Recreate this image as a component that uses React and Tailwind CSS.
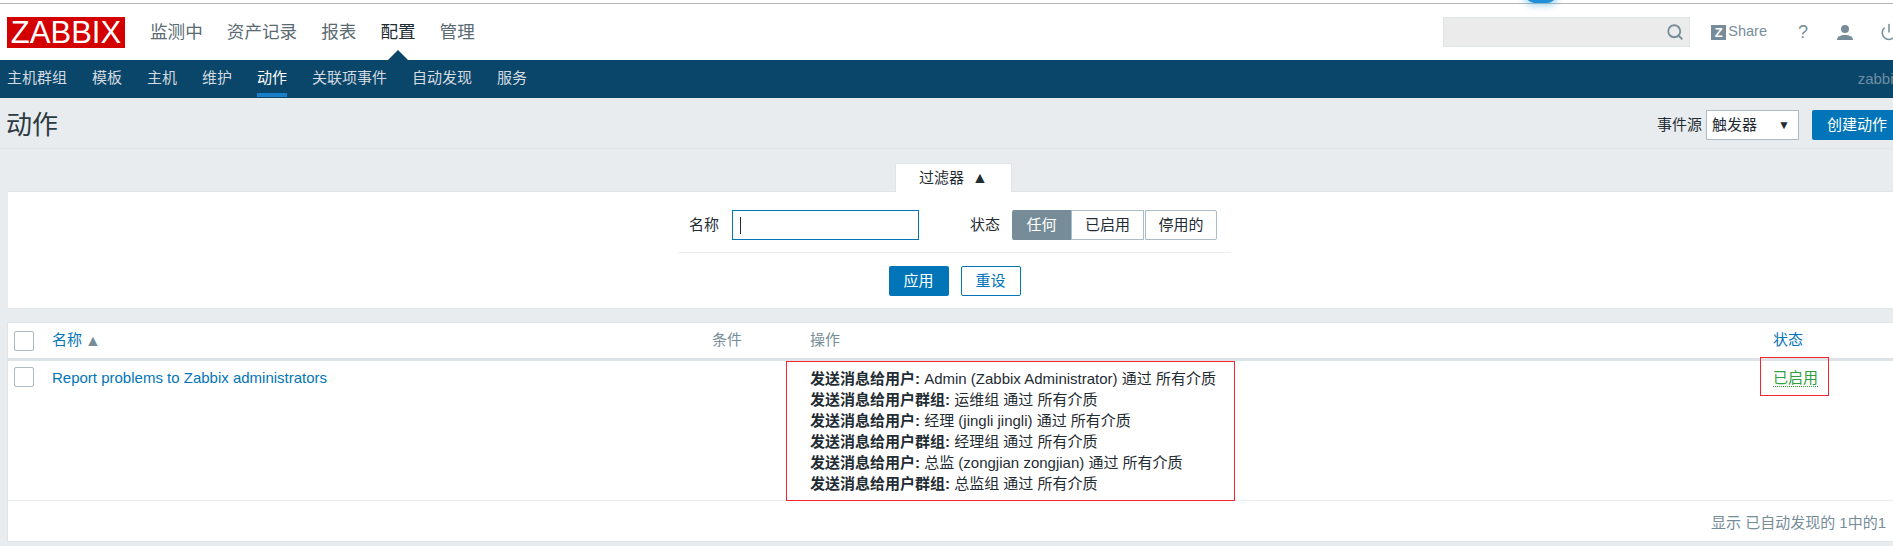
import { Search, Power } from 'lucide-react'

const topNav = ['监测中', '资产记录', '报表', '配置', '管理']
const subNav = ['主机群组', '模板', '主机', '维护', '动作', '关联项事件', '自动发现', '服务']
const ops = [
  ['发送消息给用户:', 'Admin (Zabbix Administrator) 通过 所有介质'],
  ['发送消息给用户群组:', '运维组 通过 所有介质'],
  ['发送消息给用户:', '经理 (jingli jingli) 通过 所有介质'],
  ['发送消息给用户群组:', '经理组 通过 所有介质'],
  ['发送消息给用户:', '总监 (zongjian zongjian) 通过 所有介质'],
  ['发送消息给用户群组:', '总监组 通过 所有介质'],
]

function Checkbox() {
  return <div className="w-5 h-5 bg-white border border-[#acbbc4] rounded-[2px]" />
}

export default function App() {
  return (
    <div className="relative w-full h-[546px] overflow-hidden bg-[#e9ecef] text-[#1f2c33] text-[15px] font-['Liberation_Sans','Noto_Sans_CJK_SC',sans-serif]">
      <div className="absolute left-[1526px] top-[-14px] w-[30px] h-[17px] rounded-full bg-[#1f8fd8] shadow-[0_0_6px_3px_rgba(70,170,235,0.45)]" />
      <div className="h-[3px] bg-white" />
      <div className="h-px bg-[#b5b5b5]" />

      {/* top bar */}
      <header className="h-[56px] w-[1898px] bg-white flex items-center pl-[7px]">
        <div className="w-[118px] h-[31px] bg-[#d40000] flex items-center justify-center text-white text-[31px] leading-none font-['Liberation_Sans',sans-serif] shrink-0">
          ZABBIX
        </div>
        <nav className="flex self-stretch gap-[24px] ml-[25px] text-[17.6px]">
          {topNav.map(item => (
            <span key={item} className={`relative flex items-center ${item === '配置' ? 'text-[#1f2c33]' : 'text-[#5a6a73]'}`}>
              {item}
              {item === '配置' && (
                <span className="absolute left-1/2 -translate-x-1/2 bottom-0 border-x-[10px] border-x-transparent border-b-[10px] border-b-[#0a466a]" />
              )}
            </span>
          ))}
        </nav>
        <div className="ml-auto flex items-center">
          <div className="w-[247px] h-[30px] bg-[#ebebeb] border border-[#dfe4e7] flex items-center justify-end pr-[5px]">
            <Search size={18} strokeWidth={2.4} className="text-[#768d99]" />
          </div>
          <div className="flex items-center ml-[21px] text-[#768d99] text-[14.5px]">
            <span className="w-[15px] h-[15px] bg-[#768d99] text-white text-[13px] font-bold leading-[15px] text-center mr-[2px]">Z</span>
            Share
          </div>
          <span className="ml-[31px] text-[#768d99] text-[18px] w-[12px]">?</span>
          <svg width="16" height="15" viewBox="0 0 16 15" className="ml-[27px]">
            <circle cx="8" cy="4" r="4" fill="#768d99" />
            <path d="M0 15c0-3.6 3.6-5 8-5s8 1.4 8 5z" fill="#768d99" />
          </svg>
          <Power size={18} strokeWidth={2} className="ml-[27px] text-[#768d99]" />
        </div>
      </header>

      {/* sub nav */}
      <div className="h-[38px] w-[1901px] bg-[#0a466a] flex pl-[7px] text-[#d3dbe0]">
        <nav className="flex h-[37px] gap-[25px]">
          {subNav.map(item => (
            <span key={item} className={`flex items-center border-y-4 border-t-transparent ${item === '动作' ? 'text-white border-b-[#1a7fc4]' : 'border-b-transparent'}`}>
              {item}
            </span>
          ))}
        </nav>
        <span className="ml-auto self-center text-[#6f8ea1]">zabbix</span>
      </div>

      {/* title row */}
      <div className="h-[51px] w-[1902px] flex items-center pl-[6px] pt-[4px] border-b border-[#dfe4e7]">
        <h1 className="text-[26px] font-normal text-[#2c3a42]">动作</h1>
        <div className="ml-auto flex items-center">
          <span>事件源</span>
          <div className="ml-[4px] w-[93px] h-[30px] bg-white border border-[#acbbc4] flex items-center justify-between pl-[5px] pr-[8px]">
            <span>触发器</span>
            <span className="text-[12px]">▼</span>
          </div>
          <button className="ml-[13px] w-[90px] h-[30px] bg-[#0275b8] text-white rounded-[2px]">创建动作</button>
        </div>
      </div>

      {/* filter */}
      <div className="relative z-10 -mb-px flex justify-center mt-[14px] pl-[14px] w-[1893px]">
        <div className="w-[117px] h-[29px] bg-white rounded-t-[2px] border-x border-t border-[#dfe4e7] flex items-center justify-center">
          过滤器 <span className="ml-[8px] text-[16px] leading-none">▲</span>
        </div>
      </div>
      <section className="ml-[8px] h-[118px] w-[1893px] bg-white border-y border-[#dfe4e7] flex flex-col items-center pt-[18px]">
        <div className="flex items-center w-[553px] h-[30px] pl-[11px]">
          <span>名称</span>
          <div className="ml-[13px] w-[187px] h-[30px] border border-[#0275b8] flex items-center pl-[7px]">
            <span className="w-px h-[17px] bg-[#1f2c33]" />
          </div>
          <span className="ml-[51px]">状态</span>
          <div className="ml-[12px] flex">
            <span className="w-[59px] h-[30px] bg-[#768d99] text-white flex items-center justify-center rounded-l-[2px]">任何</span>
            <span className="w-[73px] h-[30px] border border-[#acbbc4] flex items-center justify-center">已启用</span>
            <span className="ml-px w-[72px] h-[30px] border border-[#acbbc4] rounded-r-[2px] flex items-center justify-center">停用的</span>
          </div>
        </div>
        <div className="w-[553px] h-px bg-[#ebeef0] mt-[12px]" />
        <div className="flex gap-[12px] mt-[13px]">
          <button className="w-[60px] h-[30px] bg-[#0275b8] text-white rounded-[2px]">应用</button>
          <button className="w-[60px] h-[30px] bg-white text-[#0275b8] border border-[#0275b8] rounded-[2px]">重设</button>
        </div>
      </section>

      {/* table */}
      <section className="ml-[7px] mt-[13px] w-[1900px] h-[220px] bg-white border border-[#dfe4e7]">
        <div className="h-[35px] flex items-center border-b-[3px] border-[#dee3e7] box-content">
          <div className="w-[44px] pl-[6px] shrink-0"><Checkbox /></div>
          <div className="w-[660px] shrink-0 text-[#0275b8] flex items-center">
            名称 <span className="ml-[3px] text-[#768d99] text-[16px] leading-none">▲</span>
          </div>
          <div className="w-[98px] shrink-0 text-[#768d99]">条件</div>
          <div className="w-[963px] shrink-0 text-[#768d99]">操作</div>
          <div className="text-[#0275b8]">状态</div>
        </div>
        <div className="h-[140px] flex border-b border-[#ebeef0]">
          <div className="w-[44px] pl-[6px] pt-[6px] shrink-0"><Checkbox /></div>
          <div className="w-[758px] shrink-0 pt-[6px] text-[#0275b8]">Report problems to Zabbix administrators</div>
          <div className="relative w-[963px] shrink-0 pt-[7px] leading-[21px] text-[#1f2c33]">
            <div className="absolute left-[-24px] top-0 w-[449px] h-[140px] border border-[#f5262b]" />
            {ops.map(([label, rest], i) => (
              <div key={i}><b>{label}</b> {rest}</div>
            ))}
          </div>
          <div className="relative pt-[6px]">
            <span className="text-[#2f9f3f] border-b border-dotted border-[#2f9f3f]">已启用</span>
            <div className="absolute left-[-13px] top-[-4px] w-[69px] h-[39px] border border-[#f5262b]" />
          </div>
        </div>
        <div className="flex justify-end pr-[20px] pt-[11px] text-[#768d99]">显示 已自动发现的 1中的1</div>
      </section>
    </div>
  )
}
